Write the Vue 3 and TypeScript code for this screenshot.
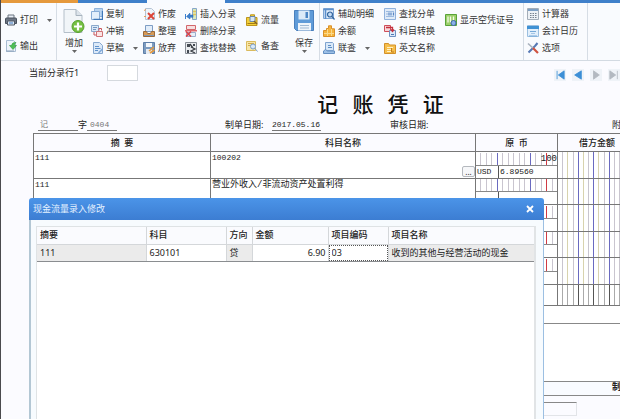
<script setup lang="ts">
interface Shape { d: string; f?: string; s?: string; w?: number }
interface Tool { label: string; icon: string; menu?: boolean }
interface Group { kind: string; tools: Tool[]; divider?: boolean }

const page = 'M2.5 .5h6l3 3v8h-9z'

const icons: Record<string, Shape[]> = {
  print: [
    { d: 'M3 1h6v4H3z', f: '#e8eef6', s: '#6b7480' },
    { d: 'M.5 5q0-1 1-1h9q1 0 1 1v4.500h-11z', f: '#6d7684', s: '#4a525e' },
    { d: 'M2.500 7h7v4h-7z', f: '#dfe9f5', s: '#4f5966' },
    { d: 'M4 9h4', s: '#3e78c0' },
  ],
  output: [
    { d: 'M1.500 .5h7l2 2v9h-9z', f: '#eef4fb', s: '#a9bdd3' },
    { d: 'M11 2.500Q7 2 6.500 5.500H4.500L8 9.500l3.500-4H9.500Q9 4 11 2.500z', f: '#4fbf55', s: '#2f9a3a', w: 0.6 },
    { d: 'M1 11h8', s: '#8aa0b8' },
  ],
  copy: [
    { d: 'M3.500 .5h8v8h-8z', f: '#b9d4f0', s: '#8fb3da' },
    { d: 'M.5 3.500h8v8h-8z', f: '#e3effb', s: '#87acd6' },
    { d: 'M2.500 11.500h9V3', s: '#3f77b8', w: 1.3 },
  ],
  reverse: [
    { d: 'M.5 .5h7v6h-7z', f: '#dce9f7', s: '#8ba9cc' },
    { d: 'M2 2.500h4M2 4.500h3', s: '#7497c2' },
    { d: 'M5.500 6.500h6v5h-6z', f: '#fbe5e5', s: '#cf7377' },
    { d: 'M3 7v3h2M8 5.500V3.500h2.500v2', s: '#c9545a' },
  ],
  draft: [
    { d: page, f: '#dbe9f8', s: '#86a8d0' },
    { d: 'M4 4.500h4M4 6.500h5.500M4 8.500h3', s: '#5f92cc' },
    { d: 'M7 10.500l4-4 1 1-4 4z', f: '#7da7d8' },
  ],
  cancel: [
    { d: page, f: '#eef4fa', s: '#b5c4d4' },
    { d: 'M1 2.500l2-1M1 8.500h2', s: '#e5a060' },
    { d: 'M5 5l6 6M11 5l-6 6', s: '#dc4437', w: 2 },
  ],
  sort: [
    { d: 'M2.500 .5h7v6h-7z', f: '#e2edf9', s: '#7d9dc4' },
    { d: 'M.5 6.500h3l1 2h3l1-2h3v5H.5z', f: '#d89a55', s: '#9a6a3c' },
    { d: 'M1 10.500h10', s: '#7c96b5' },
  ],
  discard: [
    { d: 'M.5 .5h11v11H.5z', f: '#7d9cc0', s: '#5e7fa8' },
    { d: 'M3 1h6v4H3z', f: '#f4f7fb' },
    { d: 'M3 7h6v5H3z', f: '#e6ebf1' },
    { d: 'M6 9l5-4M7 11l4.500-3', s: '#e79a3c', w: 1.6 },
  ],
  insert: [
    { d: 'M7.500 .5h4v11h-4z', f: '#d9e9bd', s: '#87a7c9' },
    { d: 'M8 3.500h3M8 6.500h3', s: '#e2c35c', w: 1.5 },
    { d: 'M5 5L1.500 8.500 5 11V9.300h3V7H5z', f: '#3c80ce', s: '#2a68b2', w: 0.5 },
    { d: 'M.5 6v5', s: '#3c80ce' },
  ],
  remove: [
    { d: 'M1.500 .5h9v4h-9z', f: '#f5dfe0', s: '#d3666b' },
    { d: 'M1.500 7.500h9v4h-9z', f: '#e8eef7', s: '#9aaccc' },
    { d: 'M0 5.800h12', s: '#d8434a', w: 1.2 },
    { d: 'M1 6.500l5 5M6 6.500l-5 5', s: '#d8434a', w: 1.6 },
  ],
  replace: [
    { d: 'M.5 .5h11v11H.5z', f: '#e9ecef', s: '#878d95' },
    { d: 'M2 2h3v3H2zM8 2h2v2H8zM2 8h2v3H2z', f: '#444a52' },
    { d: 'M6 5l4 2-4 2 4 2M5 2l3 4', s: '#3a3f46', w: 1.3 },
  ],
  flow: [
    { d: 'M.5 3.500h4V.8h4v2.700H11v8H.5z', f: '#f3cf3a', s: '#bd941b' },
    { d: 'M4 2.500h5v5H4z', f: '#d7e6f5', s: '#6b88aa' },
    { d: 'M1.500 9.500h8', s: '#a47d12' },
    { d: 'M8 7l3 3', s: '#806020', w: 1.5 },
  ],
  memo: [
    { d: 'M.5 1.500h9v9h-9z', f: '#f8e7a9', s: '#dabb5e' },
    { d: 'M2 3.500h6M2 5.500h3', s: '#d3ab4b' },
    { d: 'M4.500 6.500a2.500 2.500 0 1 0 5 0a2.500 2.500 0 1 0-5 0M9 8.500l2.500 3', f: '#d7e8f9', s: '#7b9fc9' },
  ],
  assist: [
    { d: 'M.5 .5h10v10H.5z', f: '#e6f0fb', s: '#7ea6d4' },
    { d: 'M.5 1.500h10M2.500 2v9', s: '#5d90cc', w: 1.6 },
    { d: 'M4.500 6.500a2.500 2.500 0 1 0 5 0a2.500 2.500 0 1 0-5 0M9 8.500l2.500 3', f: '#c5ddf5', s: '#34669f', w: 1.2 },
  ],
  balance: [
    { d: 'M.5 5.500h3v-2h2V.8h3v3h3v7.700H.5z', f: '#f5b43c', s: '#d9902a' },
    { d: 'M4.500 4v7M8.500 4v7M1 8.500h10', s: '#fbd98a' },
  ],
  linked: [
    { d: 'M2.500 .5h7l1 1v7h-8z', f: '#d8e8f8', s: '#7fa3cf' },
    { d: 'M5 3.500h3M5 5.500h4', s: '#5d8dc4' },
    { d: 'M.5 9q2-3 4 0h7v2.500H.5z', f: '#9dc0e6', s: '#6490c2' },
  ],
  find: [
    { d: 'M.5 .5h11v11H.5z', f: '#e0ebf8', s: '#91b2dc' },
    { d: 'M2 3.500h8M2 8.500h8', s: '#9dbbe0' },
    { d: 'M2.500 6h1M5 4.500v3M7 4.500v3M9.500 4.500v3', s: '#5685c4', w: 1.2 },
  ],
  convert: [
    { d: 'M.5 .5h6v6h-6z', f: '#f8d6d8', s: '#ce4d59' },
    { d: 'M5.500 5.500h6v6h-6z', f: '#dce9f8', s: '#6d8fc0' },
    { d: 'M2 2.500h6.500V6M7 4.500l1.500 2 1.500-2', s: '#c4303e', w: 1.3 },
    { d: 'M7 9.500h3', s: '#4e7ab6' },
  ],
  english: [
    { d: 'M.5 1.500h4l1 1.500h6v8.500H.5z', f: '#f6bf4c', s: '#d3912a' },
    { d: 'M3 5.500h6M3 7.500h4M3 9.500h5', s: '#fff0c4' },
    { d: 'M7.500 6v4h2.500', s: '#c27f1d' },
  ],
  empty: [
    { d: 'M.5 .5h11v11H.5z', f: '#9bcf6a', s: '#58a239' },
    { d: 'M3 2.500v6M5.500 2.500v6M8.500 2.500v4', s: '#f5fbe9', w: 1.3 },
    { d: 'M6 9a2.500 2.500 0 1 0 5 0a2.500 2.500 0 1 0-5 0', f: '#8ab1e8', s: '#4069a8' },
  ],
  calc: [
    { d: 'M.5 .5h11v11H.5z', f: '#edf1f5', s: '#a3adb8' },
    { d: 'M1 2h10', s: '#7ea0c4', w: 2 },
    { d: 'M3 5.500h1.500M5.500 5.500H7M8 5.500h1.500M3 7.500h1.500M5.500 7.500H7M8 7.500h1.500M3 9.500h1.500M5.500 9.500H7M8 9.500h1.500', s: '#77828f' },
  ],
  calendar: [
    { d: 'M.5 .5h11v11H.5z', f: '#e2effb', s: '#9bbfe0' },
    { d: 'M0 2.500h12', s: '#3f91d4', w: 3 },
    { d: 'M3 6.500h6M2 11h8', s: '#76a9d8' },
    { d: 'M4 8.500h4', s: '#a5c6e6' },
  ],
  options: [
    { d: 'M1.500 10.500L8 4M8 4l2.500-3', s: '#5679b5', w: 2 },
    { d: 'M1 1.500l5.500 5', s: '#a8b1bc', w: 1.6 },
    { d: 'M6 6l5 5', s: '#cf5340', w: 2.200 },
  ],
}

const groups: Group[] = [
  { kind: 'two', divider: true, tools: [{ label: '打印', icon: 'print', menu: true }, { label: '输出', icon: 'output' }] },
  { kind: 'big', tools: [{ label: '增加', icon: 'add', menu: true }] },
  { kind: 'three', tools: [{ label: '复制', icon: 'copy' }, { label: '冲销', icon: 'reverse' }, { label: '草稿', icon: 'draft', menu: true }] },
  { kind: 'three', tools: [{ label: '作废', icon: 'cancel' }, { label: '整理', icon: 'sort' }, { label: '放弃', icon: 'discard' }] },
  { kind: 'three', tools: [{ label: '插入分录', icon: 'insert' }, { label: '删除分录', icon: 'remove' }, { label: '查找替换', icon: 'replace' }] },
  { kind: 'two', tools: [{ label: '流量', icon: 'flow' }, { label: '备查', icon: 'memo' }] },
  { kind: 'big', divider: true, tools: [{ label: '保存', icon: 'save', menu: true }] },
  { kind: 'three inset', tools: [{ label: '辅助明细', icon: 'assist' }, { label: '余额', icon: 'balance' }, { label: '联查', icon: 'linked', menu: true }] },
  { kind: 'three', tools: [{ label: '查找分单', icon: 'find' }, { label: '科目转换', icon: 'convert' }, { label: '英文名称', icon: 'english' }] },
  { kind: 'two', divider: true, tools: [{ label: '显示空凭证号', icon: 'empty' }] },
  { kind: 'three inset', divider: true, tools: [{ label: '计算器', icon: 'calc' }, { label: '会计日历', icon: 'calendar' }, { label: '选项', icon: 'options' }] },
]

const navs = [
  { name: '首张', d: 'M2.500 1v10M11 1L4 6l7 5z', on: true },
  { name: '上张', d: 'M10 1L2 6l8 5z', on: true },
  { name: '下张', d: 'M3 1l7 5-7 5z', on: false },
  { name: '末张', d: 'M1 1l7 5-7 5zM10 1v10', on: false },
]

const entries = [
  { summary: '111', account: '100202', digits: '100', currency: 'USD', rate: '6.89560', lookup: true },
  { summary: '111', account: '营业外收入/非流动资产处置利得', digits: '', currency: '', rate: '', lookup: false },
  { summary: '', account: '', digits: '', currency: '', rate: '', lookup: false },
  { summary: '', account: '', digits: '', currency: '', rate: '', lookup: false },
  { summary: '', account: '', digits: '', currency: '', rate: '', lookup: false },
]

function foreignTick(n: number): string {
  if (n === 13) return 'red'
  return n === 4 || n === 10 ? 'blue' : 'plain'
}
function debitTick(n: number): string {
  if (n % 3 === 1 && n > 1) return 'blue'
  return n === 2 || n === 5 || n === 8 ? 'yellow' : 'plain'
}
</script>

<template>
  <div class="app">
    <div class="tabs"><i class="tab orange"></i><i class="tab blue"></i><i class="tab active"></i><i class="tab rest"></i></div>

    <header class="ribbon">
      <div v-for="(g, gi) in groups" :key="gi" class="group" :class="[g.kind, { divider: g.divider }]">
        <button v-for="t in g.tools" :key="t.label" type="button" class="tool">
          <svg v-if="t.icon === 'add'" class="large" viewBox="0 0 22 26">
            <path d="M1 1.500h12l6 6v17H1z" fill="#f1f5f8" stroke="#b4bfc9" />
            <path d="M13 1.500v6h6" fill="#dbe3ea" stroke="#a7b3be" />
            <circle cx="15" cy="18.500" r="6" fill="#76c043" stroke="#55a02c" />
            <path d="M15 14.500v8M11 18.500h8" stroke="#fff" stroke-width="2.200" />
          </svg>
          <svg v-else-if="t.icon === 'save'" class="large" viewBox="0 0 22 26">
            <path d="M1.500 2.500h19v20h-17l-2-2z" fill="#5f9bd8" stroke="#4a80bd" />
            <path d="M5.500 2.500h11v9h-11z" fill="#dceaf8" />
            <path d="M12.500 4h2.500v6h-2.500z" fill="#4c85c4" />
            <path d="M5 15h13v7.500H5z" fill="#eef4fa" />
            <path d="M7 17.500h9M7 20h9" stroke="#9fb9d4" />
          </svg>
          <svg v-else class="icon" viewBox="0 0 12 12">
            <path v-for="(p, pi) in icons[t.icon]" :key="pi" :d="p.d" :fill="p.f ?? 'none'" :stroke="p.s ?? 'none'" :stroke-width="p.w ?? 1" />
          </svg>
          <span>{{ t.label }}</span>
          <svg v-if="t.menu" class="caret" viewBox="0 0 5 3"><path d="M0 0h5L2.500 3z" fill="#666" /></svg>
        </button>
      </div>
    </header>

    <main class="work">
      <div class="bar">
        <label for="line">当前分录行1</label>
        <input id="line" class="line" type="text" />
        <nav class="pager">
          <button v-for="n in navs" :key="n.name" type="button" :class="{ on: n.on }" :aria-label="n.name">
            <svg viewBox="0 0 12 12"><path :d="n.d" /></svg>
          </button>
        </nav>
      </div>

      <h1>记&nbsp;&nbsp;&nbsp;账&nbsp;&nbsp;&nbsp;凭&nbsp;&nbsp;&nbsp;证</h1>

      <div class="meta">
        <div class="number">
          <input class="word" type="text" value="记" aria-label="凭证类别" />
          <label for="no">字</label>
          <input id="no" class="no" type="text" value="0404" />
        </div>
        <div class="date">
          <label for="made">制单日期:</label>
          <input id="made" type="text" value="2017.05.16" />
        </div>
        <span class="audit">审核日期:</span>
        <span class="attach">附</span>
      </div>

      <table class="voucher">
        <colgroup><col class="c1" /><col class="c2" /><col class="c3" /><col /></colgroup>
        <thead>
          <tr><th>摘&nbsp; 要</th><th>科目名称</th><th>原&nbsp; 币</th><th class="debit">借方金额</th></tr>
        </thead>
        <tbody>
          <tr v-for="(e, i) in entries" :key="i">
            <td class="text">{{ e.summary }}</td>
            <td class="text">
              <div class="account"><span>{{ e.account }}</span><button v-if="e.lookup" type="button" class="more">...</button></div>
            </td>
            <td>
              <div class="foreign">
                <div class="ticks">
                  <i v-for="n in 15" :key="n" :class="foreignTick(n)"></i>
                  <span class="digits">{{ e.digits }}</span>
                </div>
                <div class="rate"><span>{{ e.currency }}</span><span>{{ e.rate }}</span></div>
              </div>
            </td>
            <td><div class="ticks tall"><i v-for="n in 12" :key="n" :class="debitTick(n)"></i></div></td>
          </tr>
        </tbody>
        <tfoot>
          <tr><td colspan="3"></td><td><div class="ticks tall"><i v-for="n in 12" :key="n" :class="n % 3 === 1 && n > 1 ? 'dark' : 'gray'"></i></div></td></tr>
        </tfoot>
      </table>
      <div class="note"></div>
      <div class="remark"></div>
      <div class="sign"><span>制</span></div>
      <div class="foot"><input type="text" aria-label="备注" /></div>
    </main>

    <section class="dialog" role="dialog" aria-labelledby="dlg">
      <header>
        <h2 id="dlg">现金流量录入修改</h2>
        <button type="button" aria-label="关闭"><svg viewBox="0 0 8 8"><path d="M1 1l6 6M7 1L1 7" stroke="#fff" stroke-width="1.800" /></svg></button>
      </header>
      <div class="body">
        <div class="sheet">
          <table>
            <colgroup><col class="d1" /><col class="d2" /><col class="d3" /><col class="d4" /><col class="d5" /><col /></colgroup>
            <thead>
              <tr><th>摘要</th><th>科目</th><th>方向</th><th>金额</th><th>项目编码</th><th>项目名称</th></tr>
            </thead>
            <tbody>
              <tr>
                <td class="locked">111</td>
                <td>630101</td>
                <td class="locked">贷</td>
                <td class="amount">6.90</td>
                <td class="edit"><input type="text" value="03" aria-label="项目编码" /></td>
                <td class="locked">收到的其他与经营活动的现金</td>
              </tr>
            </tbody>
          </table>
        </div>
      </div>
    </section>
  </div>
</template>

<style>
body {
  margin: 0;
  overflow: hidden;
}
</style>

<style scoped>
* {
  box-sizing: border-box;
}
.app {
  position: relative;
  display: flex;
  flex-direction: column;
  min-height: 100vh;
  overflow: hidden;
  border-left: 1px solid #4a4a4e;
  background: #fbfbff;
  color: #222;
  font: 9px/12px "Noto Sans", "Noto Sans CJK SC", sans-serif;
}
button,
input {
  margin: 0;
  padding: 0;
  border: 0;
  border-radius: 0;
  background: none;
  color: inherit;
  font: inherit;
  outline: none;
}
i {
  display: block;
}

.tabs {
  display: grid;
  grid-template-columns: 77px 69px 78px 1fr;
  height: 3px;
}
.orange {
  background: #e5993c;
}
.blue,
.rest {
  background: #3f80ca;
}
.active {
  background: #f8fbff;
}

.ribbon {
  display: grid;
  grid-template-columns: 56px 33px 52px 42px 61px 43px 32px 63px 61px 80px 64px 1fr;
  height: 58px;
  border-bottom: 1px solid #d3dae2;
  background: #f9fbfe;
}
.group {
  display: flex;
  flex-direction: column;
  gap: 1px;
  padding: 3px 0 0 1px;
}
.group.two {
  gap: 10px;
  padding-top: 9px;
}
.group.two:first-child {
  padding-left: 4px;
}
.group.divider {
  border-right: 1px solid #d6dde5;
}
.group.inset {
  padding-left: 3px;
}
.tool {
  display: flex;
  align-items: center;
  gap: 3px;
  height: 16px;
  white-space: nowrap;
  color: #333;
}
.icon {
  flex: none;
  width: 12px;
  height: 12px;
}
.caret {
  flex: none;
  width: 5px;
  height: 3px;
  margin-left: 6px;
}
.big .tool {
  flex-direction: column;
  gap: 1px;
  height: 50px;
}
.big .large {
  width: 22px;
  height: 26px;
  margin: 2px 0;
}
.big .caret {
  margin: 0;
}

.bar {
  display: flex;
  align-items: center;
  height: 24px;
  padding-left: 28px;
}
.bar label {
  width: 78px;
}
.line {
  width: 31px;
  height: 16px;
  border: 1px solid #d5d9de;
  background: #fff;
}
.pager {
  display: flex;
  gap: 6px;
  margin-left: auto;
  padding: 4px 0 0;
}
.pager button {
  display: grid;
  place-items: center;
  width: 12px;
  height: 12px;
  background: #eff3f8;
}
.pager svg {
  width: 10px;
  height: 10px;
  fill: #b3b9c1;
  stroke: #b3b9c1;
}
.pager .on svg {
  fill: #3d8fd6;
  stroke: #3d8fd6;
}

h1 {
  margin: 0;
  padding: 4px 0 0 140px;
  text-align: center;
  white-space: nowrap;
  color: #111;
  font: 500 21px/28px "Noto Sans CJK SC", sans-serif;
}

.meta {
  display: grid;
  grid-template-columns: 187px 165px 1fr 8px;
  align-items: center;
  height: 16px;
  padding-left: 37px;
}
.meta input {
  height: 12px;
  border-bottom: 1px solid #777;
  font-family: "Liberation Mono", "Noto Sans CJK SC", monospace;
  font-size: 8px;
}
.number,
.date {
  display: flex;
  align-items: center;
}
.number input {
  color: #777;
}
.number .word {
  width: 40px;
  padding-left: 2px;
}
.number .no {
  width: 30px;
  padding-left: 3px;
}
.date label {
  width: 47px;
}
.date input {
  width: 49px;
}
.attach {
  white-space: nowrap;
}

table {
  width: 100%;
  border-collapse: collapse;
  table-layout: fixed;
}
th,
td {
  padding: 0;
}
.voucher {
  width: auto;
  margin-left: 32px;
  min-width: calc(100% - 32px);
  background: #fff;
}
.voucher th,
.voucher td {
  border: 1px solid #777;
}
.voucher tr > :last-child {
  border-right: 0;
}
.c1 {
  width: 177px;
}
.c2 {
  width: 265px;
}
.c3 {
  width: 82px;
}
.voucher th {
  height: 18px;
  background: #fbfbff;
  font-weight: 500;
}
.voucher .debit {
  padding-left: 16px;
}
.voucher tbody td {
  height: 27px;
}
.voucher tbody tr:nth-child(even) td {
  height: 26px;
}
.voucher .text {
  padding-left: 1px;
  vertical-align: top;
  font-family: "Liberation Mono", "Noto Sans CJK SC", monospace;
  font-size: 8px;
}
.account {
  display: flex;
  justify-content: space-between;
  height: 25px;
  font-size: 9px;
}
.voucher tbody tr:first-child .account {
  font-size: 8px;
}
.more {
  align-self: flex-end;
  width: 13px;
  height: 11px;
  border: 1px solid #b5b9be;
  border-radius: 2px;
  background: #f6f7f9;
  font-family: "Noto Sans", sans-serif;
  line-height: 7px;
}
.foreign {
  display: grid;
  grid-template-rows: 13px 12px;
  height: 25px;
}
.ticks {
  position: relative;
  display: flex;
  border-bottom: 1px solid #888;
}
.ticks.tall {
  height: 26px;
  border: 0;
}
tr:nth-child(even) .ticks.tall {
  height: 25px;
}
tfoot .ticks.tall {
  height: 20px;
}
.ticks i {
  flex: 1;
  border-right: 1px solid #c9c5cf;
}
.ticks .blue {
  background: none;
  border-color: #6a6ac0;
}
.ticks .red {
  border-color: #d03a44;
}
.ticks .yellow {
  border-color: #d8d3ae;
}
.ticks .dark {
  border-color: #555;
}
.ticks .gray {
  border-color: #aaa;
}
.foreign .ticks i:nth-of-type(15) {
  border: 0;
}
.digits {
  position: absolute;
  right: 0;
  top: 0;
  font: 9px/12px "Liberation Mono", monospace;
}
.rate {
  display: grid;
  grid-template-columns: 23px 1fr;
  font: 8px/12px "Liberation Mono", monospace;
}
.rate span {
  padding-left: 1px;
}
.rate span:first-child {
  border-right: 1px solid #555;
}
.note,
.remark,
.sign {
  margin-left: 32px;
  border-bottom: 1px solid #888;
  background: #fff;
}
.note {
  height: 18px;
}
.remark {
  height: 58px;
}
.sign {
  display: flex;
  justify-content: flex-end;
  height: 14px;
  background: #f9fbff;
  font-weight: 700;
}
.sign span {
  width: 8px;
  line-height: 10px;
}
.foot {
  margin-left: 480px;
  padding-top: 6px;
}
.foot input {
  width: 96px;
  height: 14px;
  border: 1px solid #e2e4e8;
  border-top-color: #888;
}

.dialog {
  position: absolute;
  top: 198px;
  right: 76px;
  bottom: 0;
  left: 28px;
  display: flex;
  flex-direction: column;
  border-radius: 3px 3px 0 0;
  background: #f7fbfe;
}
.dialog header {
  display: flex;
  align-items: center;
  justify-content: space-between;
  height: 22px;
  padding: 0 10px 0 4px;
  border-radius: 3px 3px 0 0;
  background: linear-gradient(#4b94e8, #3c7dd2);
  color: #e4f1ff;
}
.dialog h2 {
  margin: 0;
  font: inherit;
}
.dialog header svg {
  display: block;
  width: 8px;
  height: 8px;
}
.body {
  flex: 1;
  display: flex;
  padding: 6px 7px 0 5px;
  border-left: 2px solid #b3c7d4;
  border-right: 1px solid #9cbfe2;
}
.sheet {
  flex: 1;
  border: 1px solid #dfe3e5;
  border-right: 2px solid #e1e4e6;
  border-bottom: 0;
  background: #fff;
}
.sheet th,
.sheet td {
  height: 17px;
  padding: 0 0 0 3px;
  border-right: 1px solid #d4d7da;
  text-align: left;
  white-space: nowrap;
  font-weight: 400;
}
.sheet th {
  border-bottom: 1px solid #d4d7da;
  background: #fafbfe;
  font-weight: 500;
}
.sheet td {
  border-bottom: 1px solid #8a8d90;
}
.sheet tr > :last-child {
  border-right: 0;
}
.sheet .locked {
  background: #ebebeb;
}
.sheet .amount {
  padding-right: 2px;
  text-align: right;
}
.sheet .edit {
  padding: 0;
}
.edit input {
  display: block;
  width: 100%;
  height: 16px;
  padding-left: 2px;
  border: 1px dotted #555;
}
.d1 {
  width: 109px;
}
.d2 {
  width: 80px;
}
.d3 {
  width: 26px;
}
.d4 {
  width: 76px;
}
.d5 {
  width: 60px;
}
</style>
